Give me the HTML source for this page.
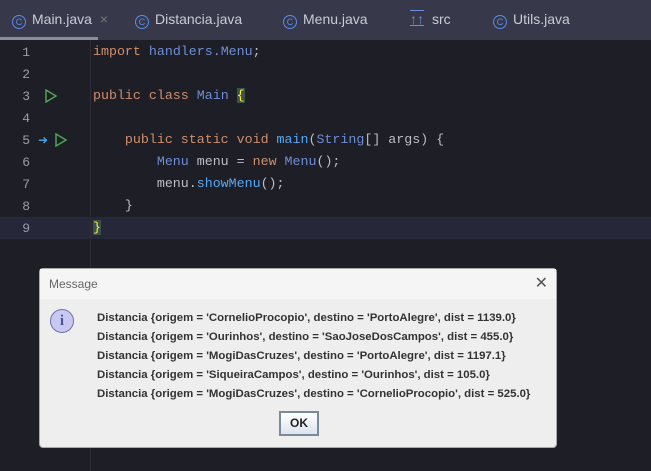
<html><head><style>
body{margin:0;width:651px;height:471px;background:#1e1f26;position:relative;overflow:hidden;font-family:"Liberation Sans",sans-serif}
.tabs{position:absolute;left:0;top:0;width:651px;height:40px;background:#373849;}
.tab{position:absolute;top:11px;color:#c9ccd6;font-size:14px}
.ci{display:inline-block;width:12px;height:12px;border:1.3px solid #5a8dea;border-radius:50%;color:#5a8dea;font-size:9px;text-align:center;line-height:12px;vertical-align:-1px;margin-right:6px}
.ul{position:absolute;left:0;top:37px;width:98px;height:3px;background:#8a8c99}
.ln{position:absolute;left:0;width:30px;text-align:right;color:#9a9cab;font:13px "Liberation Mono",monospace}
.code{position:absolute;left:93px;font:13.3px "Liberation Mono",monospace;color:#bcbec4;white-space:pre}
.k{color:#cf8e6d}.b{color:#6f8dd6}
.hl{position:absolute;left:0;top:217px;width:651px;height:22px;background:#26283a}
.dlg{position:absolute;left:39px;top:268px;width:516px;height:178px;background:#eeeeee;border:1px solid #aaa;border-radius:4px}
.dt{height:30px;background:#f5f5f5;color:#666;font-size:12px;line-height:30px;padding-left:9px}
.msg{position:absolute;left:57px;top:40px;font:bold 11.4px "Liberation Sans",sans-serif;color:#333;line-height:19px}
</style></head><body>
<div class="tabs">
<span class="tab" style="left:12px"><span class="ci">C</span>Main.java <span style="color:#777;margin-left:4px">×</span></span>
<span class="tab" style="left:135px"><span class="ci">C</span>Distancia.java</span>
<span class="tab" style="left:283px"><span class="ci">C</span>Menu.java</span>
<span class="tab" style="left:410px"><span style="color:#6f8dd6;margin-right:8px;text-decoration:overline underline">↑↑</span>src</span>
<span class="tab" style="left:493px"><span class="ci">C</span>Utils.java</span>
<div class="ul"></div></div>
<div class="hl"></div>
<div style="position:absolute;left:90px;top:40px;width:1px;height:431px;background:#2c2d36"></div>
<div class="ln" style="top:45px">1</div><div class="ln" style="top:67px">2</div><div class="ln" style="top:89px">3</div><div class="ln" style="top:111px">4</div><div class="ln" style="top:133px">5</div><div class="ln" style="top:155px">6</div><div class="ln" style="top:177px">7</div><div class="ln" style="top:199px">8</div><div class="ln" style="top:221px">9</div>
<svg style="position:absolute;left:44px;top:89px" width="14" height="14"><path d="M2 1 L12 7 L2 13Z" fill="none" stroke="#4fa354" stroke-width="1.5"/></svg>
<svg style="position:absolute;left:54px;top:133px" width="14" height="14"><path d="M2 1 L12 7 L2 13Z" fill="none" stroke="#4fa354" stroke-width="1.5"/></svg>
<span style="position:absolute;left:38px;top:133px;color:#4a9ee0;font-size:12px">➜</span>
<div class="code" style="top:44px"><span class="k">import</span> <span class="b">handlers.Menu</span>;</div>
<div class="code" style="top:88px"><span class="k">public class</span> <span class="b">Main</span> <span style="background:#3b514d;color:#ffef28">{</span></div>
<div class="code" style="top:132px">    <span class="k">public static void</span> <span style="color:#56a8f5">main</span>(<span class="b">String</span>[] args) {</div>
<div class="code" style="top:154px">        <span class="b">Menu</span> menu = <span class="k">new</span> <span class="b">Menu</span>();</div>
<div class="code" style="top:176px">        menu.<span style="color:#56a8f5">showMenu</span>();</div>
<div class="code" style="top:198px">    }</div>
<div class="code" style="top:220px"><span style="background:#3b514d;color:#ffef28">}</span></div>
<div class="dlg">
<div class="dt">Message<span style="position:absolute;right:8px;top:0;font-size:16px;color:#555">✕</span></div>
<div style="position:absolute;left:10px;top:40px;width:22px;height:22px;border-radius:50%;background:#c8c8f0;border:1px solid #7070b0;color:#5050a0;font:bold 15px 'Liberation Serif',serif;text-align:center;line-height:22px">i</div>
<div class="msg">Distancia {origem = 'CornelioProcopio', destino = 'PortoAlegre', dist = 1139.0}<br>Distancia {origem = 'Ourinhos', destino = 'SaoJoseDosCampos', dist = 455.0}<br>Distancia {origem = 'MogiDasCruzes', destino = 'PortoAlegre', dist = 1197.1}<br>Distancia {origem = 'SiqueiraCampos', destino = 'Ourinhos', dist = 105.0}<br>Distancia {origem = 'MogiDasCruzes', destino = 'CornelioProcopio', dist = 525.0}</div>
<div style="position:absolute;left:239px;top:142px;width:36px;height:21px;border:2px solid #7a8a9a;background:linear-gradient(#fff,#dde4ee);font:bold 12px 'Liberation Sans';text-align:center;line-height:21px;color:#222">OK</div>
</div>
</body></html>
